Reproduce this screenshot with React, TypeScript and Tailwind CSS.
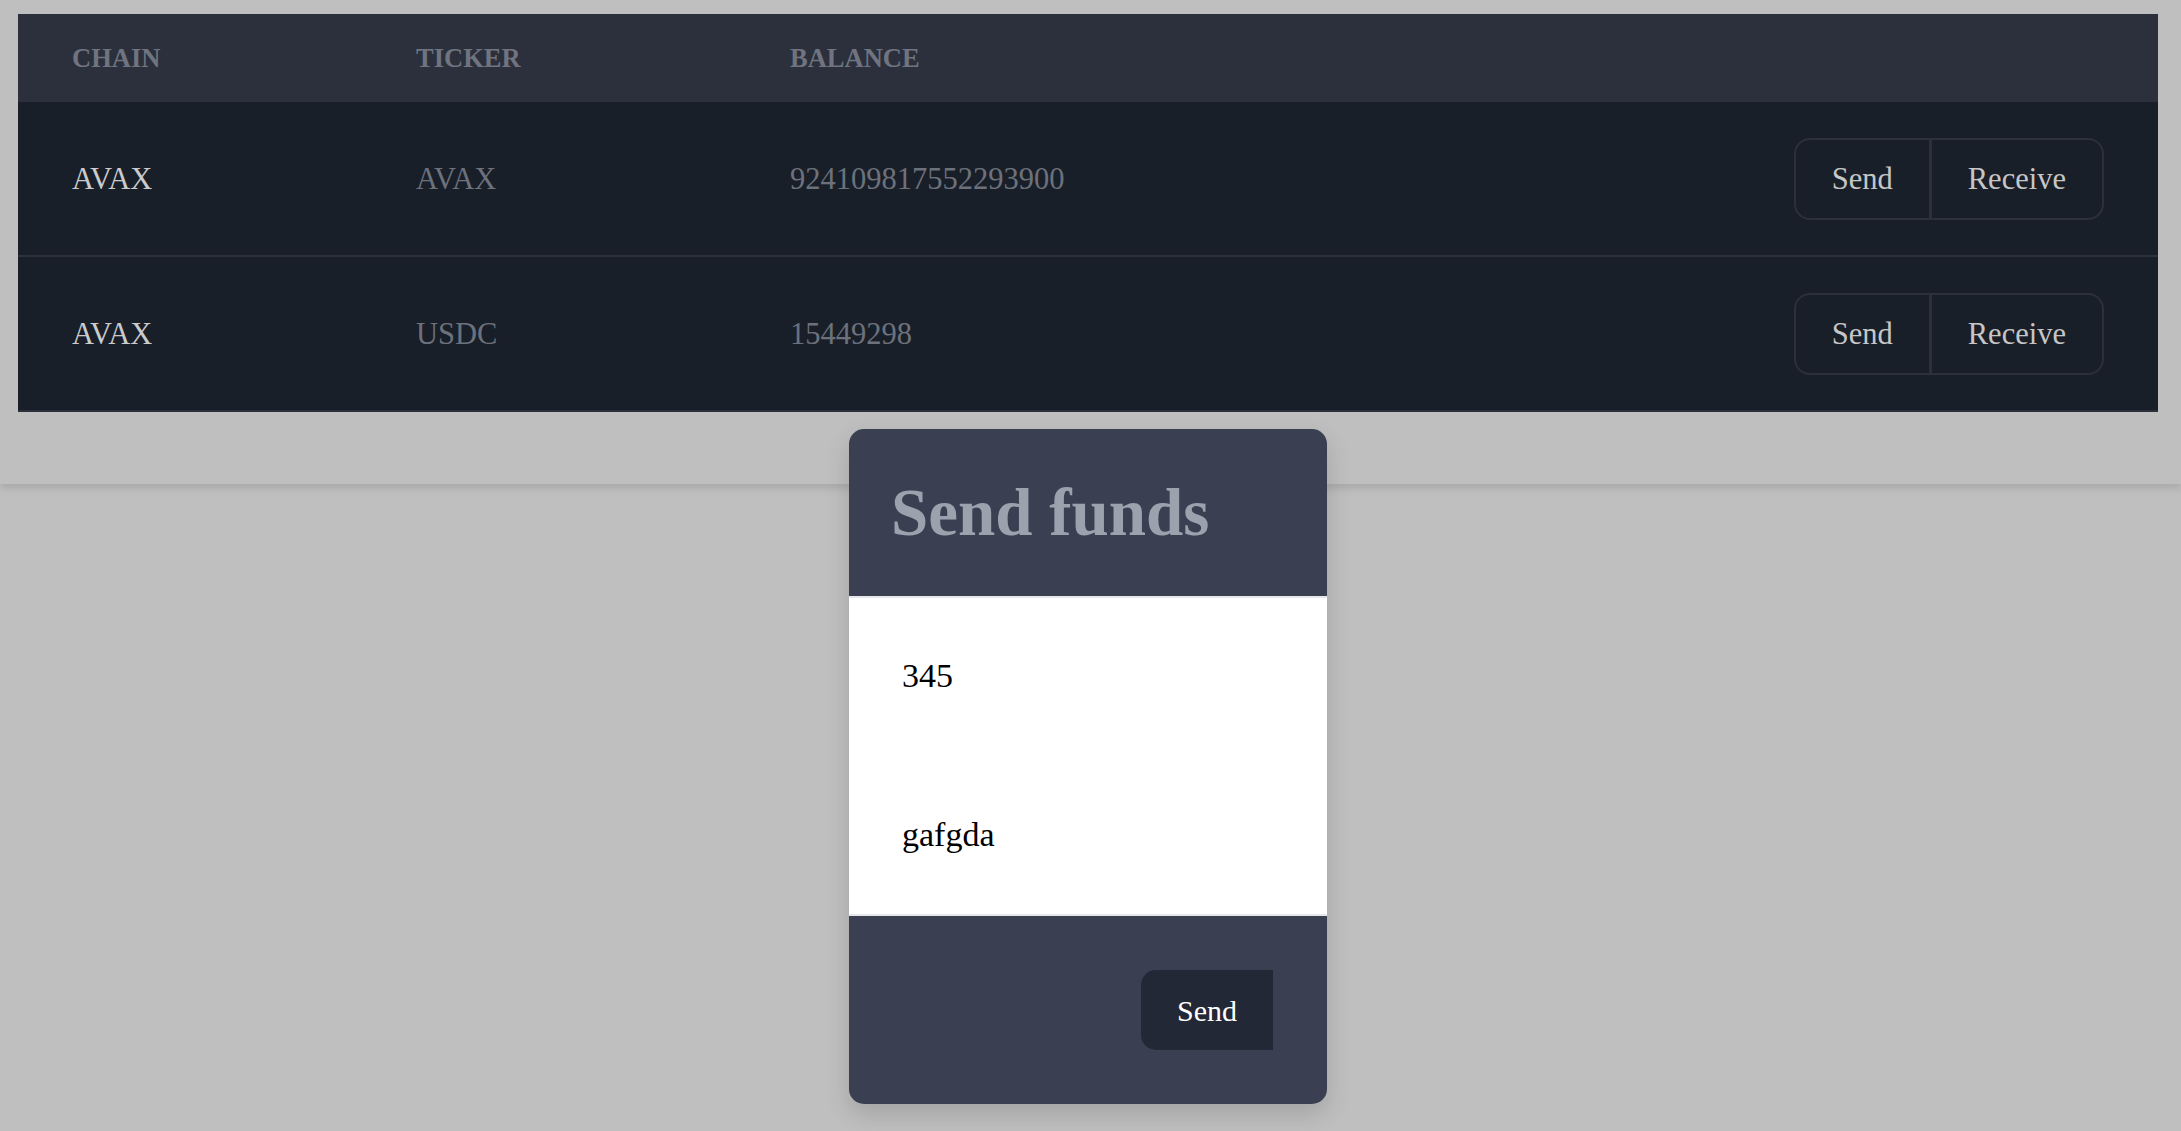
import React from 'react';

const serif = "font-['Liberation_Serif','Times_New_Roman',serif]";

const rows = [
  { chain: 'AVAX', ticker: 'AVAX', balance: '924109817552293900' },
  { chain: 'AVAX', ticker: 'USDC', balance: '15449298' },
];

function WalletTable() {
  return (
    <div className="w-full">
      {/* header */}
      <div className="grid grid-cols-[344px_374px_1fr] h-[88px] items-center pt-[2px] bg-[#2b303c] text-[26.5px] font-bold uppercase text-[#6f7480]">
        <div className="pl-[54px]">Chain</div>
        <div className="pl-[54px]">Ticker</div>
        <div className="pl-[54px]">Balance</div>
      </div>

      {rows.map((r) => (
        <div
          key={r.ticker}
          className="grid grid-cols-[344px_374px_1fr_auto] h-[155px] items-center bg-[#191f29] border-b-2 border-[#2b303c] text-[30.5px]"
        >
          <div className="pl-[54px] pt-[2px] text-[#cbcbcb]">{r.chain}</div>
          <div className="pl-[54px] pt-[2px] text-[#6c717c]">{r.ticker}</div>
          <div className="pl-[54px] pt-[2px] text-[#6c717c]">{r.balance}</div>
          <div className="pr-[54px]">
            <div className="flex h-[82px] rounded-[16px] border-2 border-[#2b303c] text-[#c6c6c6]">
              <button className="px-[36px] pt-[2px] border-r-[3px] border-[#2b303c]">Send</button>
              <button className="px-[36px] pt-[2px]">Receive</button>
            </div>
          </div>
        </div>
      ))}
    </div>
  );
}

function SendModal() {
  return (
    <div className="absolute left-[849px] top-[429px] w-[478px] rounded-[15px] overflow-hidden bg-[#3a4051] shadow-[0_10px_25px_rgba(0,0,0,0.15)]">
      <div className="h-[167px] flex items-center pl-[42px]">
        <h2 className="text-[67px] font-bold text-[#9ca1ae] leading-none">Send funds</h2>
      </div>

      <div className="h-[320px] bg-white border-y-2 border-[#e5e7eb] flex flex-col py-[38px] gap-[79px]">
        <input
          defaultValue="345"
          className="h-[80px] w-full pl-[53px] text-[34px] text-black bg-white outline-none"
        />
        <input
          defaultValue="gafgda"
          className="h-[80px] w-full pl-[53px] text-[34px] text-black bg-white outline-none"
        />
      </div>

      <div className="h-[188px] flex items-center justify-end pr-[54px]">
        <button className="w-[132px] h-[80px] rounded-l-[15px] bg-[#222836] text-white text-[30px]">
          Send
        </button>
      </div>
    </div>
  );
}

export default function App() {
  return (
    <div className={`relative min-h-screen bg-[#bfbfbf] ${serif}`}>
      <div className="h-[484px] pt-[14px] pl-[18px] pr-[23px] shadow-[0_4px_8px_rgba(0,0,0,0.12)]">
        <WalletTable />
      </div>
      <SendModal />
    </div>
  );
}
